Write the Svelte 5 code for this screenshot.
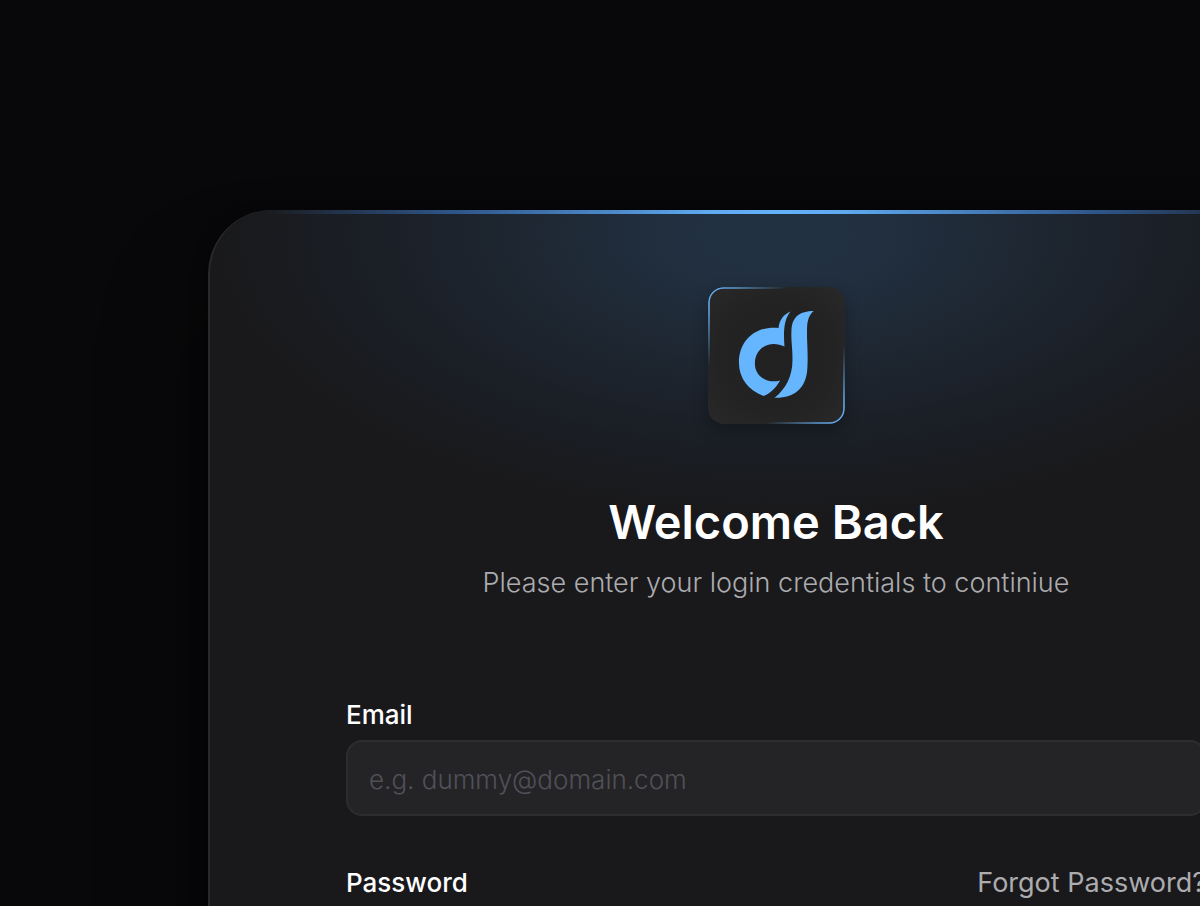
<script>
  let email = $state('');
</script>

<main class="page">
  <section class="card" aria-labelledby="title">
    <header class="intro">
      <svg class="logo" viewBox="33 33 412 412" role="img" aria-label="Logo">
        <defs>
          <radialGradient id="tile" cx="0.5" cy="0.5" r="0.7">
            <stop offset="0" stop-color="#212122" />
            <stop offset="0.6" stop-color="#232323" />
            <stop offset="1" stop-color="#2a2929" />
          </radialGradient>
          <linearGradient id="edge" gradientUnits="userSpaceOnUse" x1="36" y1="36" x2="442" y2="442">
            <stop offset="0" stop-color="#65b2f8" />
            <stop offset="0.1" stop-color="#65b2f8" stop-opacity="0.8" />
            <stop offset="0.29" stop-color="#65b2f8" stop-opacity="0" />
            <stop offset="0.71" stop-color="#65b2f8" stop-opacity="0" />
            <stop offset="0.9" stop-color="#65b2f8" stop-opacity="0.8" />
            <stop offset="1" stop-color="#65b2f8" />
          </linearGradient>
        </defs>
        <rect x="33" y="33" width="412" height="412" rx="46" fill="url(#tile)" />
        <rect x="36" y="36" width="406" height="406" rx="43" fill="none" stroke="url(#edge)" stroke-width="5" />
        <g fill="#65b5ff">
          <path d="M281 107C260 116 248 132 245 156C174 149 126 196 126 260C126 308 154 342 200 361C220 353 236 338 250 314C211 325 174 302 174 263C174 216 220 190 263 212C260 169 260 133 281 107Z" />
          <path d="M351 105C309 106 286 121 284 163C282 190 288 222 287 253C287 302 266 340 233 366C292 368 325 338 331 287C336 241 329 191 331 153C332 132 338 115 351 105Z" />
        </g>
      </svg>
      <h1 id="title">Welcome Back</h1>
      <p>Please enter your login credentials to continiue</p>
    </header>
    <form>
      <div class="field">
        <label for="email">Email</label>
        <input id="email" type="email" placeholder="e.g. dummy@domain.com" bind:value={email} />
      </div>
      <div class="row">
        <span class="label">Password</span>
        <a href="#forgot">Forgot Password?</a>
      </div>
    </form>
  </section>
</main>

<style>
  :global(body) {
    margin: 0;
    background: #08080a;
  }
  .page {
    box-sizing: border-box;
    height: 100vh;
    overflow: hidden;
    padding: 210px 0 0 208px;
    background: #08080a;
    color: #fff;
    font-family: Inter, sans-serif;
  }
  .card {
    position: relative;
    box-sizing: border-box;
    width: calc(100% + 144px);
    min-height: 100vh;
    padding: 77px 136px;
    border: 2px solid #29292c;
    border-top: 0;
    border-radius: 64px;
    overflow: hidden;
    background:
      radial-gradient(560px 280px at 50% 24px, #223142 0%, #212f3f 20%, #1e2732 45%, #1b2028 68%, #19191b 100%),
      #19191b;
    box-shadow:
      0 80px 96px #0008,
      0 8px 16px #0008;
  }
  .card::before {
    content: '';
    position: absolute;
    inset: 0 0 auto;
    height: 4px;
    background: linear-gradient(90deg, #65b2f800 5%, #2f568a 22%, #5fa9ef 44%, #65b2f8 50%, #5fa9ef 56%, #2f568a 78%, #65b2f800 95%);
  }
  .intro {
    display: flex;
    flex-direction: column;
    align-items: center;
    text-align: center;
  }
  .logo {
    display: block;
    width: 137px;
    height: 137px;
    border-radius: 16px;
    box-shadow: 0 6px 16px #0004;
  }
  h1 {
    margin: 70px 0 0;
    font-size: 47px;
    line-height: 56px;
    font-weight: 600;
  }
  p {
    margin: 16px 0 0;
    font-size: 27px;
    line-height: 34px;
    font-weight: 300;
    color: #acacb0;
  }
  form {
    display: flex;
    flex-direction: column;
    gap: 50px;
    margin-top: 98px;
  }
  .field {
    display: flex;
    flex-direction: column;
    gap: 8px;
  }
  label,
  .label,
  a {
    font-size: 26px;
    line-height: 34px;
    font-weight: 500;
  }
  input {
    box-sizing: border-box;
    width: 100%;
    height: 76px;
    padding: 2px 21px 0;
    border: 2px solid #2d2d30;
    border-radius: 16px;
    background: #242426;
    color: #fff;
    font: 300 26px Inter, sans-serif;
    outline: none;
  }
  input::placeholder {
    color: #515059;
    opacity: 1;
  }
  .row {
    display: flex;
    justify-content: space-between;
  }
  a {
    font-size: 27px;
    font-weight: 400;
    color: #acacb0;
    text-decoration: none;
  }
</style>
